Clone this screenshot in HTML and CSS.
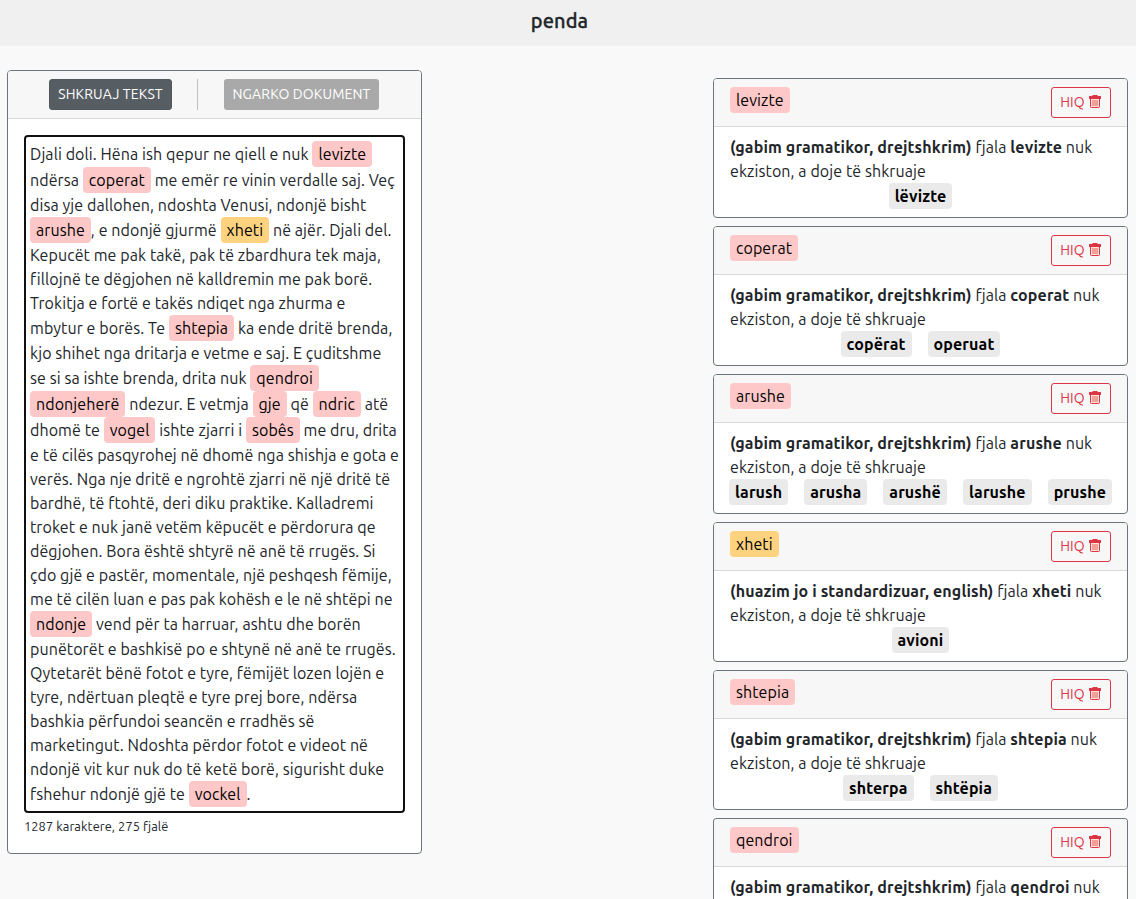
FILE: index.html
```html
<!DOCTYPE html>
<html lang="sq">
<head>
<meta charset="utf-8">
<title>penda</title>
<link rel="stylesheet" href="styles.css">
</head>
<body>
<svg class="defs" width="0" height="0"><symbol id="trash" viewBox="0 0 12 13"><path d="M3.500 0h5v1H12v3H0V1h3.500z" fill="currentColor"/><path d="M1.500 4v7.500q0 1 1 1h7q1 0 1-1V4" fill="#fce3d6" stroke="currentColor"/><path d="M4 5v6M6 5v6M8 5v6" fill="none" stroke="#e8605c"/></symbol></svg>
<header class="topbar"><h1 class="brand">penda</h1></header>
<main class="layout">
<section class="card editor">
<div class="card-header tabs">
<button class="btn btn-dark">SHKRUAJ TEKST</button>
<span class="divider"></span>
<button class="btn btn-muted">NGARKO DOKUMENT</button>
</div>
<div class="editor-body">
<div class="textbox">
<div class="line"><span>Djali doli. Hëna ish qepur ne qiell e nuk </span><mark class="mark">levizte</mark></div>
<div class="line"><span>ndërsa </span><mark class="mark">coperat</mark><span> me emër re vinin verdalle saj. Veç</span></div>
<div class="line"><span>disa yje dallohen, ndoshta Venusi, ndonjë bisht</span></div>
<div class="line"><mark class="mark">arushe</mark><span>, e ndonjë gjurmë </span><mark class="mark loan">xheti</mark><span> në ajër. Djali del.</span></div>
<div class="line"><span>Kepucët me pak takë, pak të zbardhura tek maja,</span></div>
<div class="line"><span>fillojnë te dëgjohen në kalldremin me pak borë.</span></div>
<div class="line"><span>Trokitja e fortë e takës ndiqet nga zhurma e</span></div>
<div class="line"><span>mbytur e borës. Te </span><mark class="mark">shtepia</mark><span> ka ende dritë brenda,</span></div>
<div class="line"><span>kjo shihet nga dritarja e vetme e saj. E çuditshme</span></div>
<div class="line"><span>se si sa ishte brenda, drita nuk </span><mark class="mark">qendroi</mark></div>
<div class="line"><mark class="mark">ndonjeherë</mark><span> ndezur. E vetmja </span><mark class="mark">gje</mark><span> që </span><mark class="mark">ndric</mark><span> atë</span></div>
<div class="line"><span>dhomë te </span><mark class="mark">vogel</mark><span> ishte zjarri i </span><mark class="mark">sobês</mark><span> me dru, drita</span></div>
<div class="line"><span>e të cilës pasqyrohej në dhomë nga shishja e gota e</span></div>
<div class="line"><span>verës. Nga nje dritë e ngrohtë zjarri në një dritë të</span></div>
<div class="line"><span>bardhë, të ftohtë, deri diku praktike. Kalladremi</span></div>
<div class="line"><span>troket e nuk janë vetëm këpucët e përdorura qe</span></div>
<div class="line"><span>dëgjohen. Bora është shtyrë në anë të rrugës. Si</span></div>
<div class="line"><span>çdo gjë e pastër, momentale, një peshqesh fëmije,</span></div>
<div class="line"><span>me të cilën luan e pas pak kohësh e le në shtëpi ne</span></div>
<div class="line"><mark class="mark">ndonje</mark><span> vend për ta harruar, ashtu dhe borën</span></div>
<div class="line"><span>punëtorët e bashkisë po e shtynë në anë te rrugës.</span></div>
<div class="line"><span>Qytetarët bënë fotot e tyre, fëmijët lozen lojën e</span></div>
<div class="line"><span>tyre, ndërtuan pleqtë e tyre prej bore, ndërsa</span></div>
<div class="line"><span>bashkia përfundoi seancën e rradhës së</span></div>
<div class="line"><span>marketingut. Ndoshta përdor fotot e videot në</span></div>
<div class="line"><span>ndonjë vit kur nuk do të ketë borë, sigurisht duke</span></div>
<div class="line"><span>fshehur ndonjë gjë te </span><mark class="mark">vockel</mark><span>.</span></div>
</div>
<small class="count">1287 karaktere, 275 fjalë</small>
</div>
</section>
<section class="results">
<article class="card">
<div class="card-header result-head"><mark class="mark">levizte</mark><button class="btn btn-remove">HIQ<svg class="icon"><use href="#trash"/></svg></button></div>
<div class="result-body"><p class="message"><b>(gabim gramatikor, drejtshkrim)</b> fjala <b>levizte</b> nuk<br>ekziston, a doje të shkruaje</p>
<div class="options"><b class="mark option">lëvizte</b></div></div>
</article>
<article class="card">
<div class="card-header result-head"><mark class="mark">coperat</mark><button class="btn btn-remove">HIQ<svg class="icon"><use href="#trash"/></svg></button></div>
<div class="result-body"><p class="message"><b>(gabim gramatikor, drejtshkrim)</b> fjala <b>coperat</b> nuk<br>ekziston, a doje të shkruaje</p>
<div class="options"><b class="mark option">copërat</b><b class="mark option">operuat</b></div></div>
</article>
<article class="card">
<div class="card-header result-head"><mark class="mark">arushe</mark><button class="btn btn-remove">HIQ<svg class="icon"><use href="#trash"/></svg></button></div>
<div class="result-body"><p class="message"><b>(gabim gramatikor, drejtshkrim)</b> fjala <b>arushe</b> nuk<br>ekziston, a doje të shkruaje</p>
<div class="options"><b class="mark option">larush</b><b class="mark option">arusha</b><b class="mark option">arushë</b><b class="mark option">larushe</b><b class="mark option">prushe</b></div></div>
</article>
<article class="card">
<div class="card-header result-head"><mark class="mark loan">xheti</mark><button class="btn btn-remove">HIQ<svg class="icon"><use href="#trash"/></svg></button></div>
<div class="result-body"><p class="message"><b>(huazim jo i standardizuar, english)</b> fjala <b>xheti</b> nuk<br>ekziston, a doje të shkruaje</p>
<div class="options"><b class="mark option">avioni</b></div></div>
</article>
<article class="card">
<div class="card-header result-head"><mark class="mark">shtepia</mark><button class="btn btn-remove">HIQ<svg class="icon"><use href="#trash"/></svg></button></div>
<div class="result-body"><p class="message"><b>(gabim gramatikor, drejtshkrim)</b> fjala <b>shtepia</b> nuk<br>ekziston, a doje të shkruaje</p>
<div class="options"><b class="mark option">shterpa</b><b class="mark option">shtëpia</b></div></div>
</article>
<article class="card card-cut">
<div class="card-header result-head"><mark class="mark">qendroi</mark><button class="btn btn-remove">HIQ<svg class="icon"><use href="#trash"/></svg></button></div>
<div class="result-body"><p class="message"><b>(gabim gramatikor, drejtshkrim)</b> fjala <b>qendroi</b> nuk</p></div>
</article>
</section>
</main>
</body>
</html>
```
FILE: styles.css
```css
* { box-sizing: border-box; }
body {
  margin: 0;
  height: 899px;
  overflow: hidden;
  background: #f9f9f9;
  color: #212529;
  font: 16px/24px Ubuntu, "Noto Sans", "Open Sans", sans-serif;
  letter-spacing: .085px;
}
b { letter-spacing: .135px; }
.defs { display: none; }
.topbar {
  height: 46px;
  display: flex;
  justify-content: center;
  padding: 9px 17px 0 0;
  background: #f0f0f0;
}
.brand {
  margin: 0;
  font-size: 20px;
  line-height: 24px;
  font-weight: 500;
  -webkit-text-stroke: .3px currentColor;
}
.layout {
  display: flex;
  justify-content: space-between;
  align-items: flex-start;
  padding: 24px 8px 0 7px;
}
.card {
  width: 415px;
  background: #fff;
  border: 1px solid #6c757d;
  border-radius: 4px;
  overflow: hidden;
}
.card-header {
  display: flex;
  height: 48px;
  padding: 8px 16px;
  background: #f7f7f7;
  border-bottom: 1px solid #d8d8d8;
}
.editor { height: 784px; }
.tabs { padding: 8px 42px 8px 41px; justify-content: space-between; }
.divider { width: 1px; height: 31px; margin-right: 1px; background: #c0c0c0; }
.btn {
  height: 31px;
  display: flex;
  align-items: center;
  justify-content: center;
  padding: 0 0 1px;
  border: 1px solid transparent;
  border-radius: 3px;
  font: 14px/21px Ubuntu, "Noto Sans", "Open Sans", sans-serif;
  letter-spacing: .14px;
  white-space: nowrap;
  color: #fff;
}
.btn-dark { width: 123px; background: #565e64; border-color: #51585e; }
.btn-muted { width: 155px; background: #a9a9a9; }
.btn-remove {
  width: 60px;
  gap: 4px;
  padding-right: 1px;
  color: #dc3545;
  background: transparent;
  border-color: #dc3545;
}
.icon { width: 12px; height: 13px; margin-bottom: 1px; }
.editor-body { padding: 16px; }
.textbox {
  height: 678px;
  padding: 4px;
  border: 2px solid #101010;
  border-radius: 4px;
}
.line { display: flex; align-items: center; min-height: 24px; white-space: pre; }
.mark {
  flex: none;
  height: 26px;
  padding: 1px 6px;
  border-radius: 4px;
  background: #ffc8c8;
  color: #000;
}
.loan { background: #ffd280; }
.count { display: block; margin-top: 4px; font-size: 12.8px; line-height: 19px; }
.results { display: flex; flex-direction: column; gap: 8px; padding-top: 8px; }
.results .card { height: 140px; flex: none; }
.results .card-cut {
  height: 81px;
  border-bottom: 0;
  border-radius: 4px 4px 0 0;
}
.result-head { justify-content: space-between; }
.result-body { padding: 8px 16px 0; }
.message { margin: 0; white-space: nowrap; }
.options { display: flex; justify-content: center; gap: 16px; margin: 0 -2px; }
.option { background: #eaeaea; }
```
